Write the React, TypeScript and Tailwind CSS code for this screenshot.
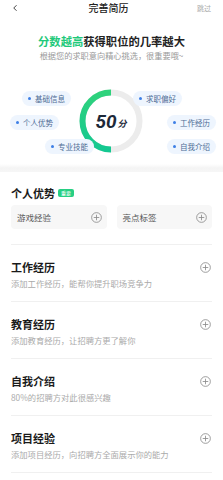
import React from 'react';
import { ChevronLeft } from 'lucide-react';

const cjk = { fontFamily: '"Noto Sans CJK SC", "Noto Sans", sans-serif' };

const PlusCircle: React.FC<{ size?: number }> = ({ size = 11 }) => (
  <svg width={size} height={size} viewBox="0 0 12 12" fill="none">
    <circle cx="6" cy="6" r="5.3" stroke="#8a8a8a" strokeWidth="0.9" />
    <path d="M6 3.4v5.2M3.4 6h5.2" stroke="#8a8a8a" strokeWidth="0.9" strokeLinecap="round" />
  </svg>
);

const Tag: React.FC<{ label: string; className: string }> = ({ label, className }) => (
  <div
    className={`absolute h-[15px] px-[6px] rounded-full bg-[#eef5fe] flex items-center gap-[4px] text-[7.5px] text-[#4d6b94] ${className}`}
  >
    <span className="w-[3px] h-[3px] rounded-full bg-[#3d7fe6]" />
    <span>{label}</span>
  </div>
);

const Gauge: React.FC = () => (
  <svg width="64" height="64" viewBox="0 0 64 64">
    <defs>
      <linearGradient id="g" x1="0" y1="0" x2="0" y2="1">
        <stop offset="0" stopColor="#2fd27c" />
        <stop offset="1" stopColor="#14c891" />
      </linearGradient>
    </defs>
    <circle cx="32" cy="32" r="28.5" fill="none" stroke="#ececec" strokeWidth="6" />
    <path d="M32 3.5 A28.5 28.5 0 0 0 32 60.5" fill="none" stroke="url(#g)" strokeWidth="6" />
  </svg>
);

const sections = [
  { title: '工作经历', sub: '添加工作经历，能帮你提升职场竞争力' },
  { title: '教育经历', sub: '添加教育经历，让招聘方更了解你' },
  { title: '自我介绍', sub: '80%的招聘方对此很感兴趣' },
  { title: '项目经验', sub: '添加项目经历，向招聘方全面展示你的能力' },
];

export default function App() {
  return (
    <div className="w-[223px] h-[480px] bg-white overflow-hidden flex flex-col" style={cjk}>
      {/* Header */}
      <div className="h-[16px] px-[10px] flex items-center justify-between">
        <ChevronLeft size={10} strokeWidth={2.2} className="text-[#333]" />
        <span className="text-[10px] leading-none text-[#222] font-medium">完善简历</span>
        <span className="text-[7px] leading-none text-[#aaa] pr-[2px]">跳过</span>
      </div>

      <div className="mt-[18px] text-center text-[11.3px] leading-[14px] font-bold text-[#222]">
        <span className="text-[#1fc97b]">分数越高</span>获得职位的几率越大
      </div>
      <div className="mt-[1px] text-center text-[8.2px] leading-[12px] text-[#999]">
        根据您的求职意向精心挑选，很重要哦~
      </div>

      {/* Score area */}
      <div className="relative h-[102px] mt-[1px]">
        <div className="absolute left-[79px] top-[27px]">
          <Gauge />
          <div className="absolute inset-0 flex items-center justify-center pt-[1px]">
            <span
              className="text-[19px] leading-none font-bold italic text-[#1d2939]"
              style={{ fontFamily: 'Roboto, "Liberation Sans", sans-serif' }}
            >
              50
            </span>
            <span className="text-[9px] leading-none font-bold italic text-[#1d2939] mt-[4px] ml-[1px]">分</span>
          </div>
        </div>
        <Tag label="基础信息" className="left-[22px] top-[29px]" />
        <Tag label="求职偏好" className="left-[133px] top-[29px]" />
        <Tag label="个人优势" className="left-[10px] top-[53px]" />
        <Tag label="工作经历" className="left-[167px] top-[53px]" />
        <Tag label="专业技能" className="left-[45px] top-[77px]" />
        <Tag label="自我介绍" className="left-[167px] top-[77px]" />
      </div>

      <div className="h-[8px] bg-gradient-to-b from-white via-[#f4f4f4] to-[#f6f6f6]" />

      {/* Personal strengths */}
      <div className="px-[11px] pt-[14px]">
        <div className="flex items-center gap-[3px] h-[14px]">
          <span className="text-[11px] font-bold text-[#1a1a1a]">个人优势</span>
          <span className="h-[8px] px-[3px] rounded-[2px] bg-[#27cf83] text-white text-[5px] leading-[8px]">重要</span>
        </div>
        <div className="mt-[5px] flex gap-[10px]">
          {['游戏经验', '亮点标签'].map((t) => (
            <div
              key={t}
              className="flex-1 h-[24px] rounded-[4px] bg-[#f7f7f7] flex items-center justify-between pl-[6px] pr-[5px]"
            >
              <span className="text-[8.5px] text-[#555]">{t}</span>
              <PlusCircle size={11} />
            </div>
          ))}
        </div>
      </div>

      <div className="mx-[11px] mt-[15px]">
        {sections.map((s) => (
          <div key={s.title} className="border-t border-[#f0f0f0] h-[57px] pt-[15px] pr-[1px] flex items-start justify-between">
            <div>
              <div className="text-[11px] leading-[14px] font-bold text-[#1a1a1a]">{s.title}</div>
              <div className="mt-[4px] text-[8.3px] leading-[11px] text-[#aaa]">{s.sub}</div>
            </div>
            <div className="mt-[2px]">
              <PlusCircle size={11} />
            </div>
          </div>
        ))}
        <div className="border-t border-[#f0f0f0]" />
      </div>
    </div>
  );
}
